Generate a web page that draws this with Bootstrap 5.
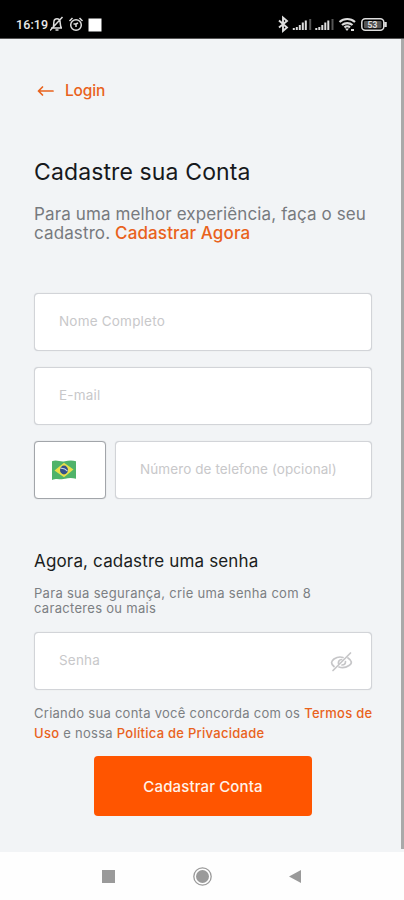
<!DOCTYPE html>
<html lang="pt-BR">
<head>
<meta charset="utf-8">
<meta name="viewport" content="width=device-width, initial-scale=1">
<title>Cadastre sua Conta</title>
<link href="https://cdn.jsdelivr.net/npm/bootstrap@5.3.0/dist/css/bootstrap.min.css" rel="stylesheet">
<style>
body{font-family:Inter,"Liberation Sans",sans-serif;background:#f2f4f6;height:900px;overflow:hidden}
.screen{height:900px}
.statusbar{height:39px;background:#000;color:#e8e8e8;border-bottom:1px solid #555;padding:11px 16px 0}
.clock{font:500 12.5px/27px Roboto,sans-serif;width:34px;letter-spacing:.1px;white-space:nowrap}
.statusbar svg{display:block}
.content{border-right:3px solid #a9a9a9;height:810px;padding:42px 30px 0 34px}
.orange{color:#e9621c;text-decoration:none}
.back{font-size:15.5px;line-height:20px;font-weight:500;letter-spacing:-.15px;gap:10px}
.title{font-size:23px;line-height:28px;font-weight:400;color:#17191c;margin:57px 0 0;letter-spacing:.12px;white-space:nowrap}
.intro{font-size:17px;line-height:19px;color:#777a7e;margin:19px 0 0;letter-spacing:.12px;white-space:nowrap}
.intro .orange{font-weight:500}
.fields{margin-top:50px;gap:16px;width:338px}
.field{height:58px;border:1px solid #d2d4d8;border-radius:4px;font-size:13.5px;padding:0 24px 3px;letter-spacing:.2px;box-shadow:0 0 1px #d2d4d8}
.phone{letter-spacing:.09px}
.field::placeholder{color:#c8c8ca;opacity:1}
.country{width:72px;margin-right:9px;height:58px;border:1px solid #a2a5aa;border-radius:4px;padding-left:16px;box-shadow:0 0 1px #b5b8bc}
.subtitle{font-size:17px;line-height:22px;font-weight:400;color:#1b1d20;letter-spacing:.16px;margin:51px 0 0;white-space:nowrap}
.hint{font-size:13px;line-height:15px;color:#7c7f83;letter-spacing:.3px;margin:14px 0 0;white-space:nowrap}
.pass{width:338px;margin-top:16px}
.eye{right:18px;top:18px}
.terms{font-size:13px;line-height:20px;color:#7c7f83;letter-spacing:.27px;margin:13px 0 0;white-space:nowrap}
.terms .orange{font-weight:500}
.submit{width:218px;height:60px;margin:13px 0 0 60px;padding-top:9px;background:#ff5500;color:#fff3ea;border:0;border-radius:4px;font-size:15px;font-weight:500;letter-spacing:.13px}
.sysnav{height:48px;margin-top:3px;background:#fefefe}
.sysnav svg{display:block}
</style>
</head>
<body>
<div class="screen">
<header class="statusbar d-flex justify-content-between">
<div class="d-flex">
<span class="clock">16:19</span>
<svg width="70" height="27" viewBox="0 0 70 27" fill="none" stroke="#ddd" stroke-width="1.5">
<path d="M1 17h11M3 17c1-2 .5-4 1-7 .7-3 5.300-3 6 0 .5 3 0 5 1.500 7M5.500 19h3M0 19.500 12.500 6"/>
<circle cx="26" cy="14" r="5.300"/><path d="M19.500 10l3-3M32.500 10l-3-3M23.500 13h2.500v3M26 13l2-1"/><path d="M38.500 7.500h13v13h-13z" fill="#fff" stroke="none"/></svg>
</div>
<svg width="112" height="27" viewBox="276 0 112 27" fill="none" stroke="#ddd" stroke-width="1.500">
<path d="M279 9.500l8 7-4 3.500V6.500l4 3.500-8 6.500" stroke-width="1.900"/>
<path d="M293.800 19v-2M296.800 19v-3M299.800 19v-5M302.800 19v-7.500M305.800 19V9.500M316.300 19v-2M319.300 19v-3M322.300 19v-5M325.300 19v-7.500M328.300 19V9.500" stroke-width="2"/>
<path d="M310.200 19V8M332.500 19V8" stroke="#555" stroke-width="2"/>
<path d="M339.500 11c4.500-4 11-4 15.500 0M342 14c3-2.500 7.500-2.500 10.500 0M344.500 16.500c1.500-1.500 4-1.500 5.500 0" stroke-width="2.200"/><path d="M347 20l-2-2.500h4zM351 18h3v2h-3z" fill="#ddd" stroke="none"/>
<rect x="361.800" y="7.800" width="22" height="11.500" rx="3.500"/><path d="M385.500 11v5" stroke-width="2.500"/><rect x="364" y="10" width="17.500" height="7.200" rx="1" fill="#555" stroke="none"/>
<text x="367.500" y="16.700" font-family="Roboto,sans-serif" font-weight="700" font-size="8.500" fill="#ddd" stroke="none">53</text></svg>
</header>
<main class="content">
<a href="#" class="orange back d-flex align-items-center"><svg width="21" height="14" viewBox="0 0 21 14" fill="none" stroke="#e9621c" stroke-width="1.700" stroke-linecap="round" stroke-linejoin="round"><path d="M19 7H4.500M8.500 3l-4 4 4 4"/></svg><span>Login</span></a>
<h1 class="title">Cadastre sua Conta</h1>
<p class="intro">Para uma melhor experiência, faça o seu<br>cadastro. <a href="#" class="orange">Cadastrar Agora</a></p>
<form>
<div class="fields d-flex flex-column">
<input class="form-control field" placeholder="Nome Completo">
<input class="form-control field" placeholder="E-mail">
<div class="d-flex">
<div class="country bg-white d-flex align-items-center flex-shrink-0"><svg width="26" height="22" viewBox="0 0 26 20" preserveAspectRatio="none"><path d="M1 2c5-2 8 1 13 0 4-1 8-1 11 0v16c-4-1-7-1-11 0-5 1-8-1-13 1z" fill="#4fb36a"/><path d="M3.500 10.500 13 3.500l9.500 6L13 16.500z" fill="#e8df4b"/><circle cx="13" cy="10" r="4" fill="#35508a"/><path d="M9.500 8.500c3-.5 5 .5 7 2.500" fill="none" stroke="#cbd8e8"/></svg></div>
<input class="form-control field phone" placeholder="Número de telefone (opcional)">
</div>
</div>
<h2 class="subtitle">Agora, cadastre uma senha</h2>
<p class="hint">Para sua segurança, crie uma senha com 8<br>caracteres ou mais</p>
<div class="pass position-relative">
<input type="password" class="form-control field" placeholder="Senha">
<svg class="eye position-absolute" width="24" height="24" viewBox="0 0 24 24" fill="none" stroke="#c6c6c8" stroke-width="1.700" stroke-linecap="round"><path d="M4 16.500C.5 13.500 1 11.500 4 9c3-2 6-2.500 9-1.500M18 8c4 2.500 4.500 5.500 1 7.500-3 2-7 2.500-10 1.500M8.500 13.500c-.5-2 1-4 3-4M15.500 11.500c0 2-1.500 3.500-3.500 3.500M3 20.500 20.500 3"/></svg>
</div>
<p class="terms">Criando sua conta você concorda com os <a href="#" class="orange">Termos de</a><br><a href="#" class="orange">Uso</a> e nossa <a href="#" class="orange">Política de Privacidade</a></p>
<button type="button" class="btn submit">Cadastrar Conta</button>
</form>
</main>
<nav class="sysnav"><svg width="404" height="48" viewBox="0 0 404 48"><path d="M102 18h13v13h-13zM301 18v13l-12-6.500z" fill="#9a9a9a"/><circle cx="202.500" cy="24.500" r="6.500" fill="#9a9a9a"/><circle cx="202.500" cy="24.500" r="8.700" fill="none" stroke="#9a9a9a" stroke-width="1.300"/></svg></nav>
</div>
<script src="https://cdn.jsdelivr.net/npm/bootstrap@5.3.0/dist/js/bootstrap.bundle.min.js"></script>
</body>
</html>
